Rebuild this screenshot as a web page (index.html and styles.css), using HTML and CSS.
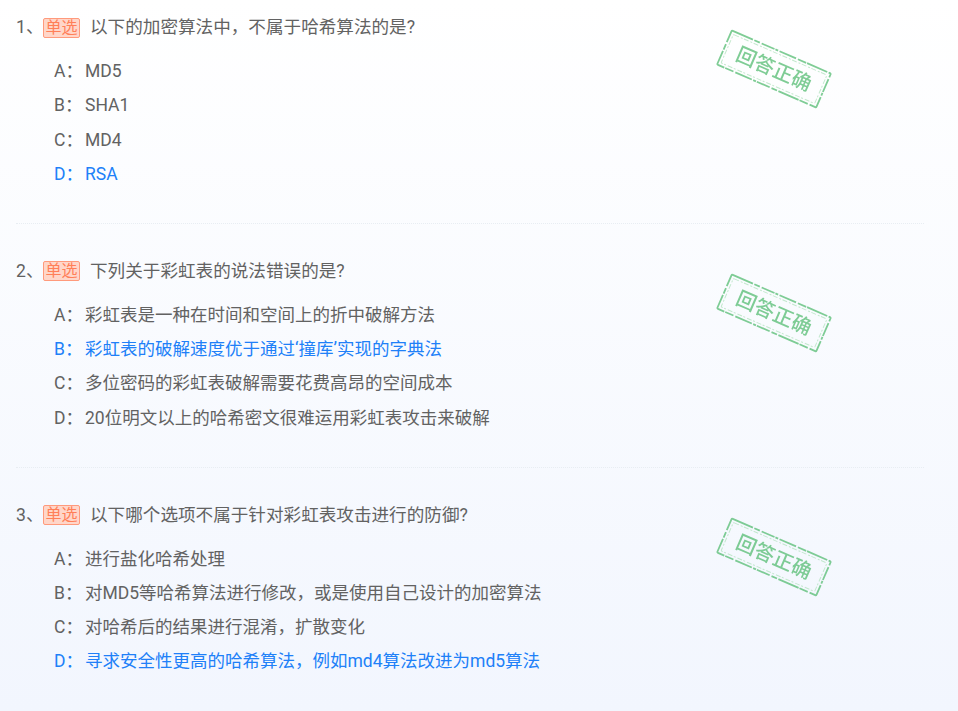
FILE: index.html
```html
<!DOCTYPE html>
<html lang="zh">
<head>
<meta charset="utf-8">
<title>答题结果</title>
<link rel="stylesheet" href="styles.css">
</head>
<body>
<main class="list">
  <section class="q">
    <h3 class="title"><span class="no">1、</span><span class="tag">单选</span><span class="text">以下的加密算法中，不属于哈希算法的是?</span></h3>
    <ul class="opts">
      <li><span class="key">A：</span>MD5</li>
      <li><span class="key">B：</span>SHA1</li>
      <li><span class="key">C：</span>MD4</li>
      <li class="right"><span class="key">D：</span>RSA</li>
    </ul>
    <svg class="stamp" viewBox="0 0 120 84" aria-hidden="true">
      <g transform="rotate(23.5 60 42)">
        <rect class="s1" x="6" y="23.5" width="108" height="37" rx="1"/>
        <rect class="s2" x="9" y="26.5" width="102" height="31" rx="1"/>
        <text class="st" x="60" y="49">回答正确</text>
      </g>
    </svg>
  </section>
  <section class="q">
    <h3 class="title"><span class="no">2、</span><span class="tag">单选</span><span class="text">下列关于彩虹表的说法错误的是?</span></h3>
    <ul class="opts">
      <li><span class="key">A：</span>彩虹表是一种在时间和空间上的折中破解方法</li>
      <li class="right"><span class="key">B：</span>彩虹表的破解速度优于通过‘撞库’实现的字典法</li>
      <li><span class="key">C：</span>多位密码的彩虹表破解需要花费高昂的空间成本</li>
      <li><span class="key">D：</span>20位明文以上的哈希密文很难运用彩虹表攻击来破解</li>
    </ul>
    <svg class="stamp" viewBox="0 0 120 84" aria-hidden="true">
      <g transform="rotate(23.5 60 42)">
        <rect class="s1" x="6" y="23.5" width="108" height="37" rx="1"/>
        <rect class="s2" x="9" y="26.5" width="102" height="31" rx="1"/>
        <text class="st" x="60" y="49">回答正确</text>
      </g>
    </svg>
  </section>
  <section class="q last">
    <h3 class="title"><span class="no">3、</span><span class="tag">单选</span><span class="text">以下哪个选项不属于针对彩虹表攻击进行的防御?</span></h3>
    <ul class="opts">
      <li><span class="key">A：</span>进行盐化哈希处理</li>
      <li><span class="key">B：</span>对MD5等哈希算法进行修改，或是使用自己设计的加密算法</li>
      <li><span class="key">C：</span>对哈希后的结果进行混淆，扩散变化</li>
      <li class="right"><span class="key">D：</span>寻求安全性更高的哈希算法，例如md4算法改进为md5算法</li>
    </ul>
    <svg class="stamp" viewBox="0 0 120 84" aria-hidden="true">
      <g transform="rotate(23.5 60 42)">
        <rect class="s1" x="6" y="23.5" width="108" height="37" rx="1"/>
        <rect class="s2" x="9" y="26.5" width="102" height="31" rx="1"/>
        <text class="st" x="60" y="49">回答正确</text>
      </g>
    </svg>
  </section>
</main>
</body>
</html>
```

FILE: styles.css
```css
html, body {
  margin: 0;
  height: 711px;
  overflow: hidden;
}
body {
  background: linear-gradient(180deg, #ffffff 0%, #f2f6fe 100%);
  font-family: Roboto, "Noto Sans CJK SC", sans-serif;
  color: #626262;
  font-size: 17.5px;
}
.list {
  padding: 0 34px 0 16px;
}
.q {
  position: relative;
  height: 208px;
  padding-top: 15px;
  margin-bottom: 19.8px;
  border-bottom: 1px dotted #e8edf2;
}
.q.last {
  border-bottom: 0;
}
.title {
  margin: 0;
  display: flex;
  align-items: center;
  height: 24px;
  font-size: 17.6px;
  font-weight: 400;
  line-height: 24px;
}
.no {
  width: 27px;
}
.tag {
  width: 37px;
  height: 20px;
  box-sizing: border-box;
  border: 1px solid #ff9a7c;
  border-radius: 2px;
  background: #ffd6c9;
  color: #ff7f58;
  font-size: 16px;
  line-height: 18px;
  text-align: center;
  margin-right: 10px;
  margin-top: 1px;
}
.opts {
  list-style: none;
  margin: 15px 0 0;
  padding: 0 0 0 38px;
}
.opts li {
  height: 34.3px;
  line-height: 34.3px;
  white-space: nowrap;
}
.key {
  display: inline-block;
  width: 31px;
}
.right {
  color: #2080f8;
}
.stamp {
  position: absolute;
  left: 698px;
  top: 27px;
  width: 120px;
  height: 84px;
  opacity: 0.78;
  filter: blur(0.4px);
}
.s1 {
  fill: none;
  stroke: #5cbf78;
  stroke-width: 1.8;
  stroke-dasharray: 22 1.5 6 2 14 1 3 1.5 18 2 9 1;
}
.s2 {
  fill: none;
  stroke: #b4e3c0;
  stroke-width: 1;
  stroke-dasharray: 5 2 2 1.5;
}
.st {
  fill: #5cbf78;
  font-family: "Noto Sans CJK SC", sans-serif;
  font-size: 20px;
  font-weight: 500;
  text-anchor: middle;
}
```
